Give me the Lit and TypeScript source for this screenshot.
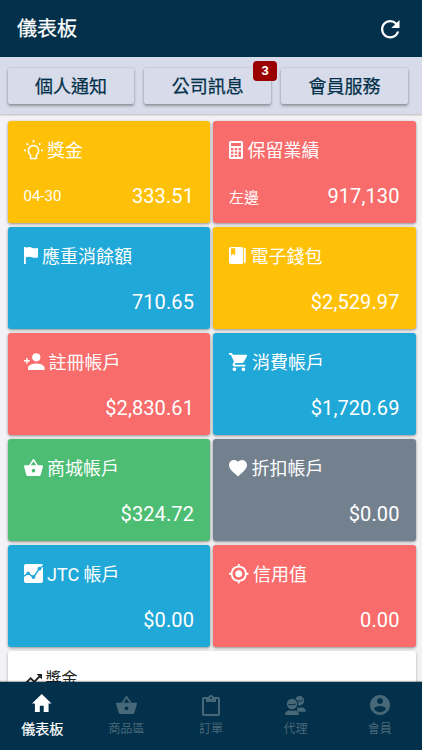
import { LitElement, html, css, svg } from "lit";
import { customElement } from "lit/decorators.js";
import { classMap } from "lit/directives/class-map.js";

interface Icon {
  box: string;
  w: number;
  h: number;
  art: unknown;
}

const p = (d: string) => svg`<path d=${d} />`;

const basket = "M17.21 9l-4.38-6.56c-.19-.28-.51-.42-.83-.42s-.64.14-.83.43L6.79 9H2c-.55 0-1 .45-1 1 0 .09.01.18.04.27l2.54 9.27c.23.84 1 1.46 1.92 1.46h13c.92 0 1.69-.62 1.93-1.46l2.54-9.27L23 10c0-.55-.45-1-1-1h-4.79zM9 9l3-4.4L15 9H9zm3 8c-1.1 0-2-.9-2-2s.9-2 2-2 2 .9 2 2-.9 2-2 2z";

const icons: Record<string, Icon> = {
  bulb: {
    box: "0 0 19 20", w: 19, h: 20,
    art: svg`<path fill="none" stroke="currentColor" stroke-width="1.5" d="M6.6 18.6v-3.6a5.2 5.2 0 1 1 5.8 0v3.6z" />
      <path stroke="currentColor" stroke-width="1.8" d="M9.5 .3v2.3M0 10.3h2M17 10.3h2M2.6 3.4l1.4 1.4M16.4 3.4l-1.4 1.4" />`,
  },
  calculator: {
    box: "0 0 14 18", w: 14, h: 18,
    art: svg`<path fill-rule="evenodd" d="M1.5 0h11A1.5 1.5 0 0 1 14 1.5v15a1.5 1.5 0 0 1-1.5 1.5h-11A1.5 1.5 0 0 1 0 16.5v-15A1.5 1.5 0 0 1 1.5 0zM2 2v3h10V2zM2 7v2.2h2.4V7zm3.8 0v2.2h2.4V7zm3.7 0v2.2H12V7zM2 10.5v2.2h2.4v-2.2zm3.8 0v2.2h2.4v-2.2zm3.7 0V16H12v-5.5zM2 13.9V16h2.4v-2.1zm3.8 0V16h2.4v-2.1z" />`,
  },
  flag: { box: "0 0 14 17", w: 14, h: 17, art: p("M0 0h1.7l.3.8C4-.1 6-.1 8 .7c2 .8 4 .8 6 0v9.5c-2 .9-4 .8-6 .1-2-.8-4-.9-6.2 0V17H0z") },
  book: {
    box: "0 0 17 17", w: 17, h: 17,
    art: svg`<path fill-rule="evenodd" d="M1.8 0H12.5A1.5 1.5 0 0 1 14 1.5v14a1.5 1.5 0 0 1-1.5 1.5H1.8A1.8 1.8 0 0 1 0 15.2V1.8A1.8 1.8 0 0 1 1.8 0zM2 1.3v7.2l2.1-1.8 2.1 1.8V1.3z" /><path d="M14.8 .4q2 .5 2 2v12.2q0 1.5-2 2z" />`,
  },
  personAdd: {
    box: "0 0 20.5 17", w: 20.5, h: 17,
    art: svg`<circle cx="12.3" cy="4.3" r="4.1" /><path d="M4 17v-2.2c0-2.9 5.4-4.3 8.3-4.3s8.2 1.4 8.2 4.3V17z" /><path stroke="currentColor" stroke-width="1.5" d="M0 7.8h5.8M2.9 4.9v5.8" />`,
  },
  cart: { box: "1 2 20.5 20", w: 18.5, h: 18, art: p("M7 18c-1.1 0-1.99.9-1.99 2S5.9 22 7 22s2-.9 2-2-.9-2-2-2zM1 2v2h2l3.6 7.59-1.35 2.45c-.16.28-.25.61-.25.96 0 1.1.9 2 2 2h12v-2H7.42c-.14 0-.25-.11-.25-.25l.03-.12.9-1.63h7.45c.75 0 1.41-.41 1.75-1.03l3.58-6.49A1.003 1.003 0 0 0 20 4H5.21l-.94-2H1zm16 16c-1.1 0-1.99.9-1.99 2s.89 2 1.99 2 2-.9 2-2-.9-2-2-2z") },
  basket: { box: "1 2 22 19", w: 19, h: 17, art: p(basket) },
  heart: { box: "2 3 20 18.35", w: 18, h: 16.5, art: p("M12 21.35l-1.45-1.32C5.4 15.36 2 12.28 2 8.5 2 5.42 4.42 3 7.5 3c1.74 0 3.41.81 4.5 2.09C13.09 3.81 14.76 3 16.5 3 19.58 3 22 5.42 22 8.5c0 3.78-3.4 6.86-8.55 11.54L12 21.35z") },
  chart: {
    box: "0 0 19 19", w: 19, h: 19,
    art: svg`<rect width="19" height="19" rx="2" /><g class="cut"><path fill="none" stroke-width="1.5" d="M0 12.2L4.3 9.2l5.2 4.3L15.3 4.5 19 2" /><circle cx="4.2" cy="9.4" r="1.8" /><circle cx="9.5" cy="13" r="1.9" /><circle cx="15.5" cy="4.6" r="1.9" /></g>`,
  },
  target: { box: "1 1 22 22", w: 19.5, h: 19.5, art: p("M12 8c-2.21 0-4 1.79-4 4s1.79 4 4 4 4-1.79 4-4-1.79-4-4-4zm8.94 3A8.994 8.994 0 0 0 13 3.06V1h-2v2.06A8.994 8.994 0 0 0 3.06 11H1v2h2.06A8.994 8.994 0 0 0 11 20.94V23h2v-2.06A8.994 8.994 0 0 0 20.94 13H23v-2h-2.06zM12 19c-3.87 0-7-3.13-7-7s3.13-7 7-7 7 3.13 7 7-3.13 7-7 7z") },
  refresh: { box: "4 4 16 16", w: 18.5, h: 18.5, art: p("M17.65 6.35A7.958 7.958 0 0 0 12 4c-4.42 0-7.99 3.58-7.99 8s3.57 8 7.99 8c3.73 0 6.84-2.55 7.73-6h-2.08A5.99 5.99 0 0 1 12 18c-3.31 0-6-2.69-6-6s2.69-6 6-6c1.66 0 3.14.69 4.22 1.78L13 11h7V4l-2.35 2.35z") },
  trend: { box: "2 6 20 12", w: 18, h: 11, art: p("M16 6l2.29 2.29-4.88 4.88-4-4L2 16.59 3.41 18l6-6 4 4 6.3-6.29L22 12V6z") },
  home: { box: "2 3 20 17", w: 19.5, h: 18, art: p("M10 20v-6h4v6h5v-8h3L12 3 2 12h3v8z") },
  navBasket: { box: "1 2 22 19", w: 21, h: 18, art: p(basket) },
  clipboard: { box: "3 0 18 21", w: 18, h: 21, art: p("M19 2h-4.18C14.4.84 13.3 0 12 0c-1.3 0-2.4.84-2.82 2H5c-1.1 0-2 .9-2 2v15c0 1.1.9 2 2 2h14c1.1 0 2-.9 2-2V4c0-1.1-.9-2-2-2zm-7 0c.55 0 1 .45 1 1s-.45 1-1 1-1-.45-1-1 .45-1 1-1zm7 17H5V4h2v3h10V4h2v15z") },
  people: {
    box: "0 0 21 19", w: 21, h: 19,
    art: svg`<circle cx="14.5" cy="4.8" r="4.7" /><path d="M12.5 15.8h8.5c-.2-2.8-2.2-4.2-4.4-4.5l-2.3.8-2.5-.8z" />
      <circle class="front" cx="7" cy="8" r="5.2" /><path class="body" d="M0 19c.2-3.2 2.2-4.5 4.2-4.8q2.800 1.300 5.600 0c2 .3 4 1.600 4.200 4.800z" />
      <path class="line" fill="none" d="M3.200 8.400c2.600.6 5.200.4 7.600-.4M12.800 5q2.600.3 5-.4" />`,
  },
  account: { box: "2 2 20 20", w: 20, h: 20, art: p("M12 2C6.48 2 2 6.48 2 12s4.48 10 10 10 10-4.48 10-10S17.52 2 12 2zm0 3c1.66 0 3 1.34 3 3s-1.34 3-3 3-3-1.34-3-3 1.34-3 3-3zm0 14.2c-2.5 0-4.71-1.28-6-3.22.03-1.99 4-3.08 6-3.08 1.99 0 5.97 1.09 6 3.08-1.29 1.94-3.5 3.22-6 3.22z") },
};

const icon = (name: string) => {
  const i = icons[name];
  return html`<svg class="icon" viewBox=${i.box} width=${i.w} height=${i.h} preserveAspectRatio="none" fill="currentColor">${i.art}</svg>`;
};

const cards = [
  { icon: "bulb", title: "獎金", note: "04-30", value: "333.51", tone: "amber" },
  { icon: "calculator", title: "保留業績", note: "左邊", value: "917,130", tone: "red" },
  { icon: "flag", title: "應重消餘額", value: "710.65", tone: "blue" },
  { icon: "book", title: "電子錢包", value: "$2,529.97", tone: "amber" },
  { icon: "personAdd", title: "註冊帳戶", value: "$2,830.61", tone: "red" },
  { icon: "cart", title: "消費帳戶", value: "$1,720.69", tone: "blue" },
  { icon: "basket", title: "商城帳戶", value: "$324.72", tone: "green" },
  { icon: "heart", title: "折扣帳戶", value: "$0.00", tone: "slate" },
  { icon: "chart", title: "JTC 帳戶", value: "$0.00", tone: "blue" },
  { icon: "target", title: "信用值", value: "0.00", tone: "red" },
];

const tabs = [
  { icon: "home", label: "儀表板", active: true },
  { icon: "navBasket", label: "商品區" },
  { icon: "clipboard", label: "訂單" },
  { icon: "people", label: "代理" },
  { icon: "account", label: "會員" },
];

@customElement("app-root")
export class AppRoot extends LitElement {
  static styles = css`
    :host {
      display: flex;
      flex-direction: column;
      height: 750px;
      overflow: hidden;
      background: #f3f3f5;
      font-family: Roboto, "Noto Sans CJK TC", sans-serif;
      color: #fff;
    }
    * { box-sizing: border-box; }
    .icon { display: block; flex: none; overflow: visible; }
    header {
      flex: none;
      height: 57px;
      padding: 1px 22.5px 0 17px;
      display: flex;
      align-items: center;
      justify-content: space-between;
      background: #03304a;
    }
    h1 { margin: 0; font-size: 20px; line-height: 24px; font-weight: 400; -webkit-text-stroke: 0.25px currentColor; }
    .actions {
      flex: none;
      height: 57px;
      padding: 11px 14px 10px 7.5px;
      display: grid;
      grid-template-columns: repeat(3, 1fr);
      gap: 10px;
      background: #d8dcea;
      box-shadow: 0 1px 2px rgba(0, 0, 0, 0.25);
      z-index: 1;
    }
    .action {
      position: relative;
      display: flex;
      align-items: center;
      justify-content: center;
      height: 36px;
      border-radius: 2px;
      background: #d8dcea;
      color: #03304a;
      font-size: 18px;
      font-weight: 400;
      -webkit-text-stroke: 0.25px currentColor;
      line-height: 20px;
      padding-top: 1px;
      box-shadow: 0 2px 3px rgba(0, 0, 0, 0.32), 0 0 2px rgba(0, 0, 0, 0.16);
    }
    .badge {
      position: absolute;
      top: -7px;
      right: -6px;
      width: 24px;
      height: 20px;
      border-radius: 4px;
      background: #9b0000;
      color: #fff;
      font-family: "Liberation Sans", sans-serif;
      font-size: 13px;
      font-weight: 700;
      -webkit-text-stroke: 0;
      line-height: 20px;
      text-align: center;
    }
    main {
      flex: 1;
      min-height: 0;
      overflow: hidden;
      padding: 7.4px 6.5px 0 7.5px;
    }
    .cards {
      display: grid;
      grid-template-columns: 1fr 1fr;
      grid-auto-rows: 102px;
      gap: 4px 3px;
    }
    .card {
      display: flex;
      flex-direction: column;
      padding: 18px 16px 0;
      border-radius: 3px;
      box-shadow: 0 1px 3px rgba(0, 0, 0, 0.42);
    }
    .amber { background: #ffc107; --tone: #ffc107; }
    .red { background: #f86c6b; --tone: #f86c6b; }
    .blue { background: #20a8d8; --tone: #20a8d8; }
    .green { background: #4dbd74; --tone: #4dbd74; }
    .slate { background: #73818f; --tone: #73818f; }
    .cut { fill: var(--tone); stroke: var(--tone); }
    .cut circle { stroke: none; }
    .title {
      display: flex;
      align-items: center;
      gap: 4.5px;
      height: 24px;
      font-size: 18px;
      line-height: 24px;
      font-weight: 400;
    }
    .title .icon { margin-bottom: 3px; }
    .figures {
      display: flex;
      align-items: center;
      justify-content: space-between;
      height: 26px;
      margin-top: 20px;
    }
    .note { font-size: 15px; }
    .value { margin-left: auto; font-size: 20px; letter-spacing: 0.1px; }
    .panel {
      height: 100px;
      margin-top: 4px;
      padding: 16px 16px;
      background: #fff;
      color: #222;
      border-radius: 3px;
      box-shadow: 0 1px 3px rgba(0, 0, 0, 0.3);
    }
    .panel .title { font-size: 16px; gap: 4px; }
    .panel .icon { margin-bottom: 0; }
    nav {
      flex: none;
      height: 68.5px;
      display: grid;
      grid-template-columns: repeat(5, 1fr);
      background: #03304a;
      box-shadow: 0 -1px 1px rgba(0, 0, 0, 0.3);
      z-index: 1;
    }
    .tab {
      display: flex;
      flex-direction: column;
      align-items: center;
      padding-top: 11.5px;
      color: #476878;
      font-size: 12px;
    }
    .glyph { height: 24px; display: flex; align-items: center; }
    .label { line-height: 18px; margin-top: 3px; }
    .active { color: #fff; font-size: 14px; -webkit-text-stroke: 0.2px currentColor; }
    .active .glyph { height: 20px; }
    .active .label { margin-top: 6.5px; }
    .front { stroke: #03304a; stroke-width: 2; paint-order: stroke; }
    .line { stroke: #03304a; stroke-width: 1; }
  `;

  render() {
    return html`
      <header><h1>儀表板</h1>${icon("refresh")}</header>
      <section class="actions">
        <div class="action">個人通知</div>
        <div class="action">公司訊息<span class="badge">3</span></div>
        <div class="action">會員服務</div>
      </section>
      <main>
        <div class="cards">
          ${cards.map(
            (c) => html`<article class="card ${c.tone}">
              <div class="title">${icon(c.icon)}<span>${c.title}</span></div>
              <div class="figures">
                ${c.note ? html`<span class="note">${c.note}</span>` : ""}
                <span class="value">${c.value}</span>
              </div>
            </article>`
          )}
        </div>
        <section class="panel"><div class="title">${icon("trend")}<span>獎金</span></div></section>
      </main>
      <nav>
        ${tabs.map(
          (t) => html`<div class=${classMap({ tab: true, active: !!t.active })}>
            <div class="glyph">${icon(t.icon)}</div>
            <div class="label">${t.label}</div>
          </div>`
        )}
      </nav>
    `;
  }
}
